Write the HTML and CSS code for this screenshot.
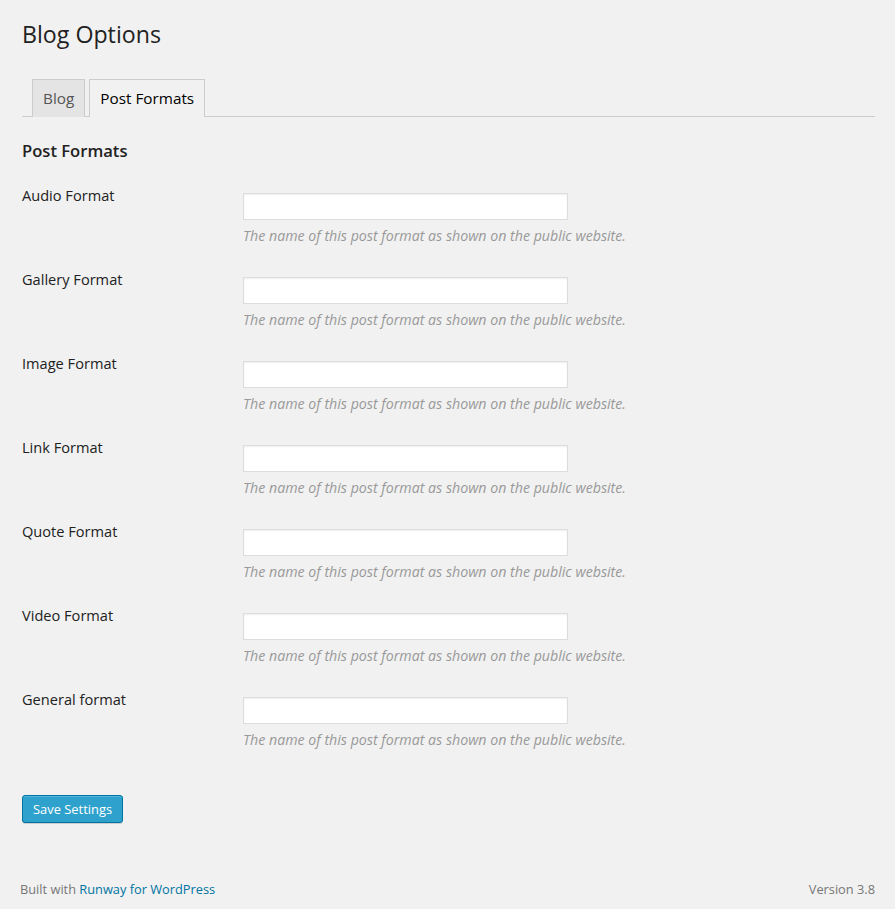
FILE: index.html
```html
<!DOCTYPE html>
<html>
<head>
<meta charset="utf-8">
<link rel="stylesheet" href="styles.css">
</head>
<body>
<div class="wrap">
  <h2 class="title">Blog Options</h2>
  <div class="tabs">
    <a class="tab">Blog</a>
    <a class="tab active">Post Formats</a>
  </div>
  <h3 class="section">Post Formats</h3>
  <div class="form">
    <div class="row"><div class="label">Audio Format</div><div class="field"><input class="input" type="text"><p class="desc">The name of this post format as shown on the public website.</p></div></div>
    <div class="row"><div class="label">Gallery Format</div><div class="field"><input class="input" type="text"><p class="desc">The name of this post format as shown on the public website.</p></div></div>
    <div class="row"><div class="label">Image Format</div><div class="field"><input class="input" type="text"><p class="desc">The name of this post format as shown on the public website.</p></div></div>
    <div class="row"><div class="label">Link Format</div><div class="field"><input class="input" type="text"><p class="desc">The name of this post format as shown on the public website.</p></div></div>
    <div class="row"><div class="label">Quote Format</div><div class="field"><input class="input" type="text"><p class="desc">The name of this post format as shown on the public website.</p></div></div>
    <div class="row"><div class="label">Video Format</div><div class="field"><input class="input" type="text"><p class="desc">The name of this post format as shown on the public website.</p></div></div>
    <div class="row"><div class="label">General format</div><div class="field"><input class="input" type="text"><p class="desc">The name of this post format as shown on the public website.</p></div></div>
  </div>
  <button class="button">Save Settings</button>
</div>
<div class="footer">
  <span class="footer-left">Built with <a class="link">Runway for WordPress</a></span>
  <span class="footer-right">Version 3.8</span>
</div>
</body>
</html>
```
FILE: styles.css
```css
html, body {
  margin: 0;
  padding: 0;
  background: #f1f1f1;
  font-family: "Open Sans", sans-serif;
  color: #222;
}
.wrap {
  padding: 0 20px 0 22px;
}
.title {
  margin: 0;
  padding-top: 19px;
  font-size: 23.2px;
  font-weight: 400;
  line-height: 30px;
  color: #222;
}
.tabs {
  display: flex;
  gap: 4px;
  margin-top: 30px;
  padding-left: 10px;
  border-bottom: 1px solid #ccc;
  height: 37px;
}
.tab {
  display: block;
  border: 1px solid #ccc;
  border-bottom: none;
  background: #e4e4e4;
  color: #555;
  font-size: 15.3px;
  line-height: 24px;
  padding: 6px 10px;
  margin-bottom: -1px;
}
.tab.active {
  background: #f1f1f1;
  color: #000;
  padding-bottom: 7px;
}
.section {
  margin: 0;
  margin-top: 24px;
  font-size: 16.6px;
  font-weight: 600;
  line-height: 20px;
  color: #222;
}
.form {
  margin-top: 25px;
}
.row {
  display: grid;
  grid-template-columns: 221px 1fr;
  height: 84px;
}
.label {
  font-size: 14.6px;
  line-height: 20px;
  margin-top: -1px;
  color: #222;
}
.field {
  display: flex;
  flex-direction: column;
  align-items: flex-start;
}
.input {
  box-sizing: border-box;
  width: 325px;
  height: 27px;
  margin: 7px 0 0 0;
  border: 1px solid #ddd;
  background: #fff;
  box-shadow: inset 0 1px 2px rgba(0,0,0,.07);
  font-family: "Open Sans", sans-serif;
  font-size: 14px;
}
.desc {
  margin: 6px 0 0 0;
  font-size: 14.2px;
  line-height: 20px;
  font-style: italic;
  color: #999;
}
.button {
  margin-top: 21px;
  height: 28px;
  padding: 0 10px;
  border: 1px solid #0074a2;
  border-radius: 3px;
  background: #2ea2cc;
  box-shadow: inset 0 1px 0 rgba(120,200,230,.5), 0 1px 0 rgba(0,0,0,.15);
  color: #fff;
  font-family: "Open Sans", sans-serif;
  font-size: 12.9px;
  line-height: 26px;
}
.footer {
  display: flex;
  justify-content: space-between;
  padding: 0 20px;
  margin-top: 56px;
  font-size: 12.8px;
  line-height: 20px;
  color: #777;
}
.link {
  color: #0074a2;
}
```
